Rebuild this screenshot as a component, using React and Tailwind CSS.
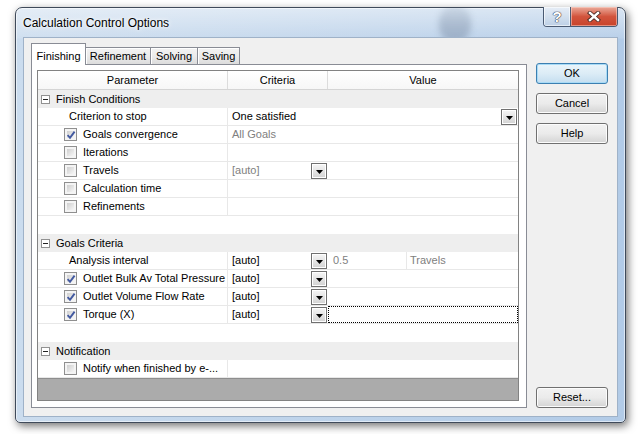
import React from "react";

function Checkbox({ checked }) {
  return (
    <span className="relative w-[13px] h-[13px] border border-[#8f8f8f] bg-[#f4f4f4] p-[2px] shrink-0 flex">
      <span className="flex-1 bg-linear-to-br from-[#cfcfcf] to-[#f6f6f6]" />
      {checked && (
        <svg className="absolute left-[1px] top-[1px]" width="10" height="10" viewBox="0 0 10 10">
          <path d="M1.6 5.2 L4 7.8 L8.6 1.6" stroke="#4259a0" strokeWidth="1.9" fill="none" />
        </svg>
      )}
    </span>
  );
}

function DropBtn() {
  return (
    <span className="ml-auto w-[16px] h-[16px] border border-[#707070] bg-linear-to-b from-[#f6f6f6] to-[#d3d3d3] shadow-[inset_0_0_0_1px_#ffffff] flex items-center justify-center shrink-0">
      <svg width="7" height="4" viewBox="0 0 7 4" className="mt-[2px]">
        <path d="M0 0H7L3.5 4Z" fill="#000" />
      </svg>
    </span>
  );
}

function MinusBox() {
  return (
    <span className="w-[9px] h-[9px] border border-[#919191] bg-white flex items-center justify-center shrink-0">
      <span className="w-[5px] h-px bg-[#222]" />
    </span>
  );
}

const ROW = "h-[18px] flex border-b border-[#e8e8e8] bg-white shrink-0";
const PCELL = "w-[190px] border-r border-[#e8e8e8] flex items-center shrink-0";
const CCELL = "w-[100px] flex items-center pl-[4px] pr-px shrink-0";

function GroupRow({ label }) {
  return (
    <div className="h-[18px] flex items-center bg-[#eeeeee] shrink-0 pl-[3px]">
      <MinusBox />
      <span className="ml-[6px]">{label}</span>
    </div>
  );
}

function CheckRow({ label, checked, criteria, gray, drop, value }) {
  return (
    <div className={ROW}>
      <div className={PCELL + " pl-[26px]"}>
        <Checkbox checked={checked} />
        <span className="ml-[6px] whitespace-nowrap">{label}</span>
      </div>
      <div className={CCELL}>
        {criteria && <span className={gray ? "text-[#808080]" : "text-black"}>{criteria}</span>}
        {drop && <DropBtn />}
      </div>
      <div className="flex-1 flex">{value}</div>
    </div>
  );
}

function Empty() {
  return <div className="h-[18px] bg-white shrink-0" />;
}

function Tab({ label, w }) {
  return (
    <div
      className={
        "h-[17px] border border-l-0 border-b-0 border-[#898c95] bg-linear-to-b from-[#f3f3f3] via-[#ebebeb] to-[#dcdcdc] shadow-[inset_1px_1px_0_#ffffff] flex items-center justify-center " +
        w
      }
    >
      {label}
    </div>
  );
}

function Btn({ children, def }) {
  return (
    <div
      className={
        "h-[21px] w-[72px] rounded-[3px] border flex items-center justify-center " +
        (def
          ? "border-[#3c7fb1] bg-linear-to-b from-[#eaf5fb] via-[#dcecf6] to-[#c4def0] shadow-[inset_0_0_0_1px_#a9dbf6]"
          : "border-[#707070] bg-linear-to-b from-[#f2f2f2] via-[#ebebeb] to-[#d4d4d4] shadow-[inset_0_0_0_1px_#fcfcfc]")
      }
    >
      {children}
    </div>
  );
}

export default function App() {
  return (
    <div className="w-[643px] h-[434px] bg-white overflow-hidden pt-[7px] pl-[15px] font-[family-name:Liberation_Sans,Arial,sans-serif] text-[11px] text-black">
      <div className="relative w-[611px] h-[416px] border border-[#3f4a5a] rounded-t-[7px] rounded-b-[5px] bg-[linear-gradient(180deg,rgba(255,255,255,0.5)_0px,rgba(255,255,255,0.1)_30px,rgba(255,255,255,0)_31px),linear-gradient(90deg,#cbdcee,#b2cbe7)] shadow-[inset_0_0_0_1px_rgba(255,255,255,0.55),2px_3px_8px_rgba(0,0,0,0.55)] flex flex-col">
        {/* title bar */}
        <div className="relative h-[29px] shrink-0 flex items-center pl-[7px] overflow-hidden rounded-t-[6px]">
          <div className="absolute left-[423px] top-[-2px] w-[32px] h-[36px] rounded-[45%] bg-linear-to-b from-[#c3cfdd] via-[#95a6bc] to-[#8093ad] blur-[3px] opacity-60" />
          <span className="relative text-[12px] [text-shadow:0_0_6px_#ffffff,0_0_3px_#ffffff]">
            Calculation Control Options
          </span>
        </div>
        {/* caption buttons */}
        <div className="absolute top-[-1px] right-[7px] flex h-[20px] border border-t-0 border-[#4a5a72] rounded-b-[4px] overflow-hidden">
          <div className="w-[27px] h-full bg-linear-to-b from-[#e7eef7] via-[#d3e0ee] to-[#bdd0e6] border-r border-[#4a5a72] flex items-center justify-center shadow-[inset_0_0_0_1px_rgba(255,255,255,0.6)]">
            <span className="text-[15px] font-bold leading-none text-white [text-shadow:0_0_1px_#334,0_0_1px_#334,0_0_1px_#334]">?</span>
          </div>
          <div className="w-[46px] h-full bg-linear-to-b from-[#e9a99a] via-[#d2543d] to-[#c8432a] flex items-center justify-center shadow-[inset_0_0_0_1px_rgba(255,220,210,0.5)]">
            <svg width="14" height="11" viewBox="0 0 14 11">
              <path d="M3 2 L11 9 M11 2 L3 9" stroke="#4a2a24" strokeWidth="4.2" strokeLinecap="square" />
              <path d="M3 2 L11 9 M11 2 L3 9" stroke="#ffffff" strokeWidth="2.4" strokeLinecap="square" />
            </svg>
          </div>
        </div>
        {/* client */}
        <div className="mx-[7px] h-[380px] border border-[#9fb2c8] bg-[#f0f0f0] flex pt-[5px] pl-[7px] pr-[9px] pb-[8px]">
          {/* tabs column */}
          <div className="w-[496px] flex flex-col">
            <div className="relative z-10 h-[21px] flex items-end">
              <div className="w-[55px] h-[22px] -mb-px bg-white border border-b-0 border-[#898c95] flex justify-center pt-[4px]">
                Finishing
              </div>
              <Tab label="Refinement" w="w-[65px]" />
              <Tab label="Solving" w="w-[47px]" />
              <Tab label="Saving" w="w-[42px]" />
            </div>
            <div className="h-[344px] border border-[#898c95] bg-white pl-[5px] pt-[5px] pr-[7px] pb-[6px]">
              <div className="w-[482px] h-[331px] border border-[#828282] bg-white flex flex-col">
                {/* header */}
                <div className="h-[19px] flex border-b border-[#d5d5d5] bg-linear-to-b from-[#ffffff] to-[#f7f7f7] shrink-0">
                  <div className="w-[190px] border-r border-[#dcdcdc] flex items-center justify-center">Parameter</div>
                  <div className="w-[100px] border-r border-[#dcdcdc] flex items-center justify-center">Criteria</div>
                  <div className="flex-1 flex items-center justify-center">Value</div>
                </div>
                <GroupRow label="Finish Conditions" />
                <div className={ROW}>
                  <div className={PCELL + " pl-[31px]"}>Criterion to stop</div>
                  <div className="flex-1 flex items-center pl-[4px] pr-px">
                    <span>One satisfied</span>
                    <DropBtn />
                  </div>
                </div>
                <CheckRow label="Goals convergence" checked criteria="All Goals" gray />
                <CheckRow label="Iterations" />
                <CheckRow label="Travels" criteria="[auto]" gray drop />
                <CheckRow label="Calculation time" />
                <CheckRow label="Refinements" />
                <Empty />
                <GroupRow label="Goals Criteria" />
                <div className={ROW}>
                  <div className={PCELL + " pl-[31px]"}>Analysis interval</div>
                  <div className={CCELL}>
                    <span>[auto]</span>
                    <DropBtn />
                  </div>
                  <div className="flex-1 flex">
                    <div className="w-[79px] border-r border-[#e8e8e8] flex items-center pl-[5px] text-[#808080]">0.5</div>
                    <div className="flex-1 flex items-center pl-[3px] text-[#808080]">Travels</div>
                  </div>
                </div>
                <CheckRow label="Outlet Bulk Av Total Pressure" checked criteria="[auto]" drop />
                <CheckRow label="Outlet Volume Flow Rate" checked criteria="[auto]" drop />
                <CheckRow
                  label="Torque (X)"
                  checked
                  criteria="[auto]"
                  drop
                  value={<div className="flex-1 border border-dotted border-black" />}
                />
                <Empty />
                <GroupRow label="Notification" />
                <CheckRow label="Notify when finished by e-..." />
                <div className="flex-1 bg-[#ababab] border-t border-[#8e8e8e]" />
              </div>
            </div>
          </div>
          {/* buttons column */}
          <div className="ml-[9px] w-[72px] flex flex-col pt-[20px]">
            <Btn def>OK</Btn>
            <div className="h-[9px]" />
            <Btn>Cancel</Btn>
            <div className="h-[9px]" />
            <Btn>Help</Btn>
            <div className="flex-1" />
            <Btn>Reset...</Btn>
          </div>
        </div>
      </div>
    </div>
  );
}
